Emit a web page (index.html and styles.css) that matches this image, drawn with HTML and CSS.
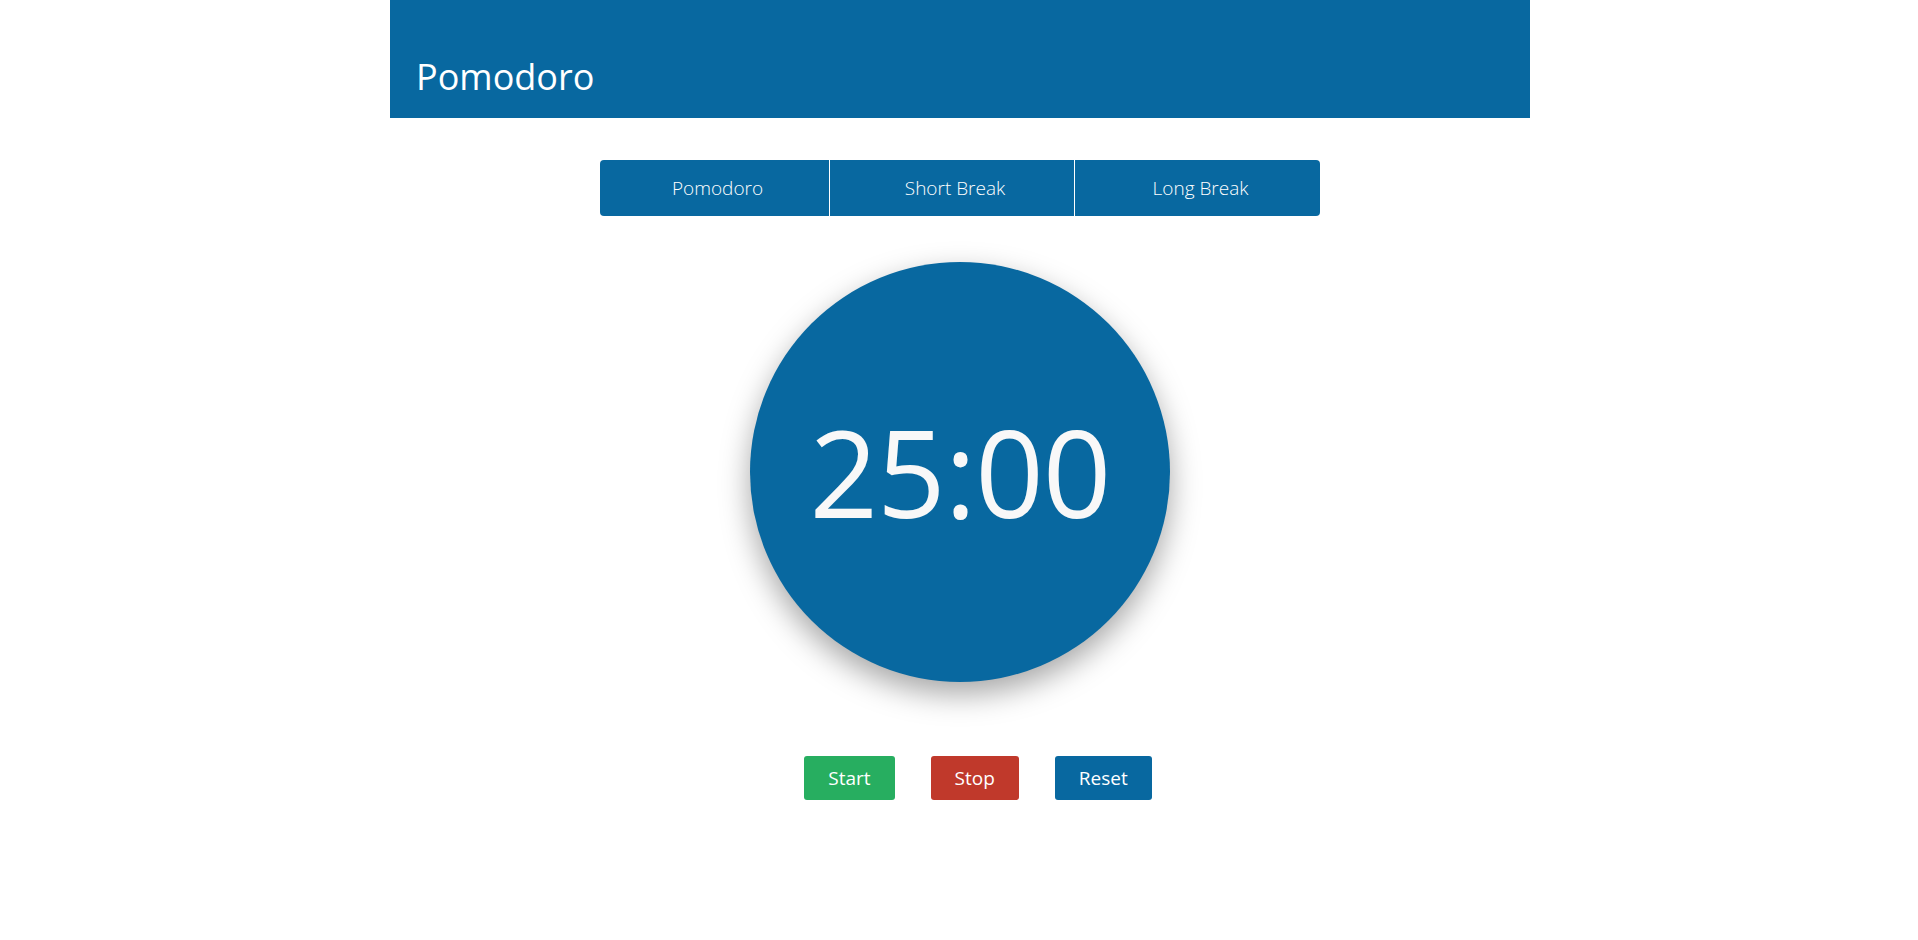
FILE: index.html
```html
<!DOCTYPE html>
<html lang="en">
<head>
<meta charset="utf-8">
<title>Pomodoro</title>
<link rel="stylesheet" href="styles.css">
</head>
<body>
<div class="container">
  <header class="header">
    <h1 class="title">Pomodoro</h1>
  </header>
  <main class="main">
    <div class="tabs">
      <button class="tab">Pomodoro</button>
      <button class="tab">Short Break</button>
      <button class="tab">Long Break</button>
    </div>
    <div class="clock">
      <span class="time">25:00</span>
    </div>
    <div class="controls">
      <button class="btn btn-start">Start</button>
      <button class="btn btn-stop">Stop</button>
      <button class="btn btn-reset">Reset</button>
    </div>
  </main>
</div>
</body>
</html>
```
FILE: styles.css
```css
* { box-sizing: border-box; }
html, body { margin: 0; padding: 0; background: #fff; }
body {
  font-family: "Open Sans", "Liberation Sans", sans-serif;
  color: #fff;
  padding-left: 2px;
}
.container {
  width: 1140px;
  margin: 0 auto;
}
.header {
  background: #0868a0;
  height: 118px;
  padding: 0 26px;
  display: flex;
  align-items: flex-end;
}
.title {
  margin: 0 0 21px 0;
  font-size: 36px;
  font-weight: 400;
  line-height: 40px;
}
.main {
  display: flex;
  flex-direction: column;
  align-items: center;
  padding-top: 42px;
}
.tabs {
  display: grid;
  grid-template-columns: 229px 245px 246px;
  height: 56px;
  border-radius: 4px;
  overflow: hidden;
}
.tab {
  background: #0868a0;
  color: #fff;
  border: none;
  font-family: "Open Sans", "Liberation Sans", sans-serif;
  font-size: 19px;
  font-weight: 300;
  padding: 0 0 0 6px;
  margin: 0;
  height: 56px;
}
.tab + .tab { border-left: 1px solid #fff; }
.clock {
  margin-top: 46px;
  width: 420px;
  height: 420px;
  border-radius: 50%;
  background: #0868a0;
  box-shadow: 0 12px 30px rgba(0, 0, 0, 0.35);
  display: flex;
  align-items: center;
  justify-content: center;
}
.time {
  font-size: 120px;
  font-weight: 400;
  letter-spacing: -1px;
  color: #f8f8f8;
  line-height: 1;
  margin-top: 0;
}
.controls {
  display: flex;
  gap: 36px;
  margin-top: 74px;
  padding-left: 36px;
}
.btn {
  border: none;
  color: #fff;
  font-family: "Open Sans", "Liberation Sans", sans-serif;
  font-size: 19px;
  font-weight: 400;
  height: 44px;
  padding: 0 24px;
  border-radius: 3px;
}
.btn-start { background: #27ae60; }
.btn-stop { background: #c0392b; }
.btn-reset { background: #0868a0; }
```
